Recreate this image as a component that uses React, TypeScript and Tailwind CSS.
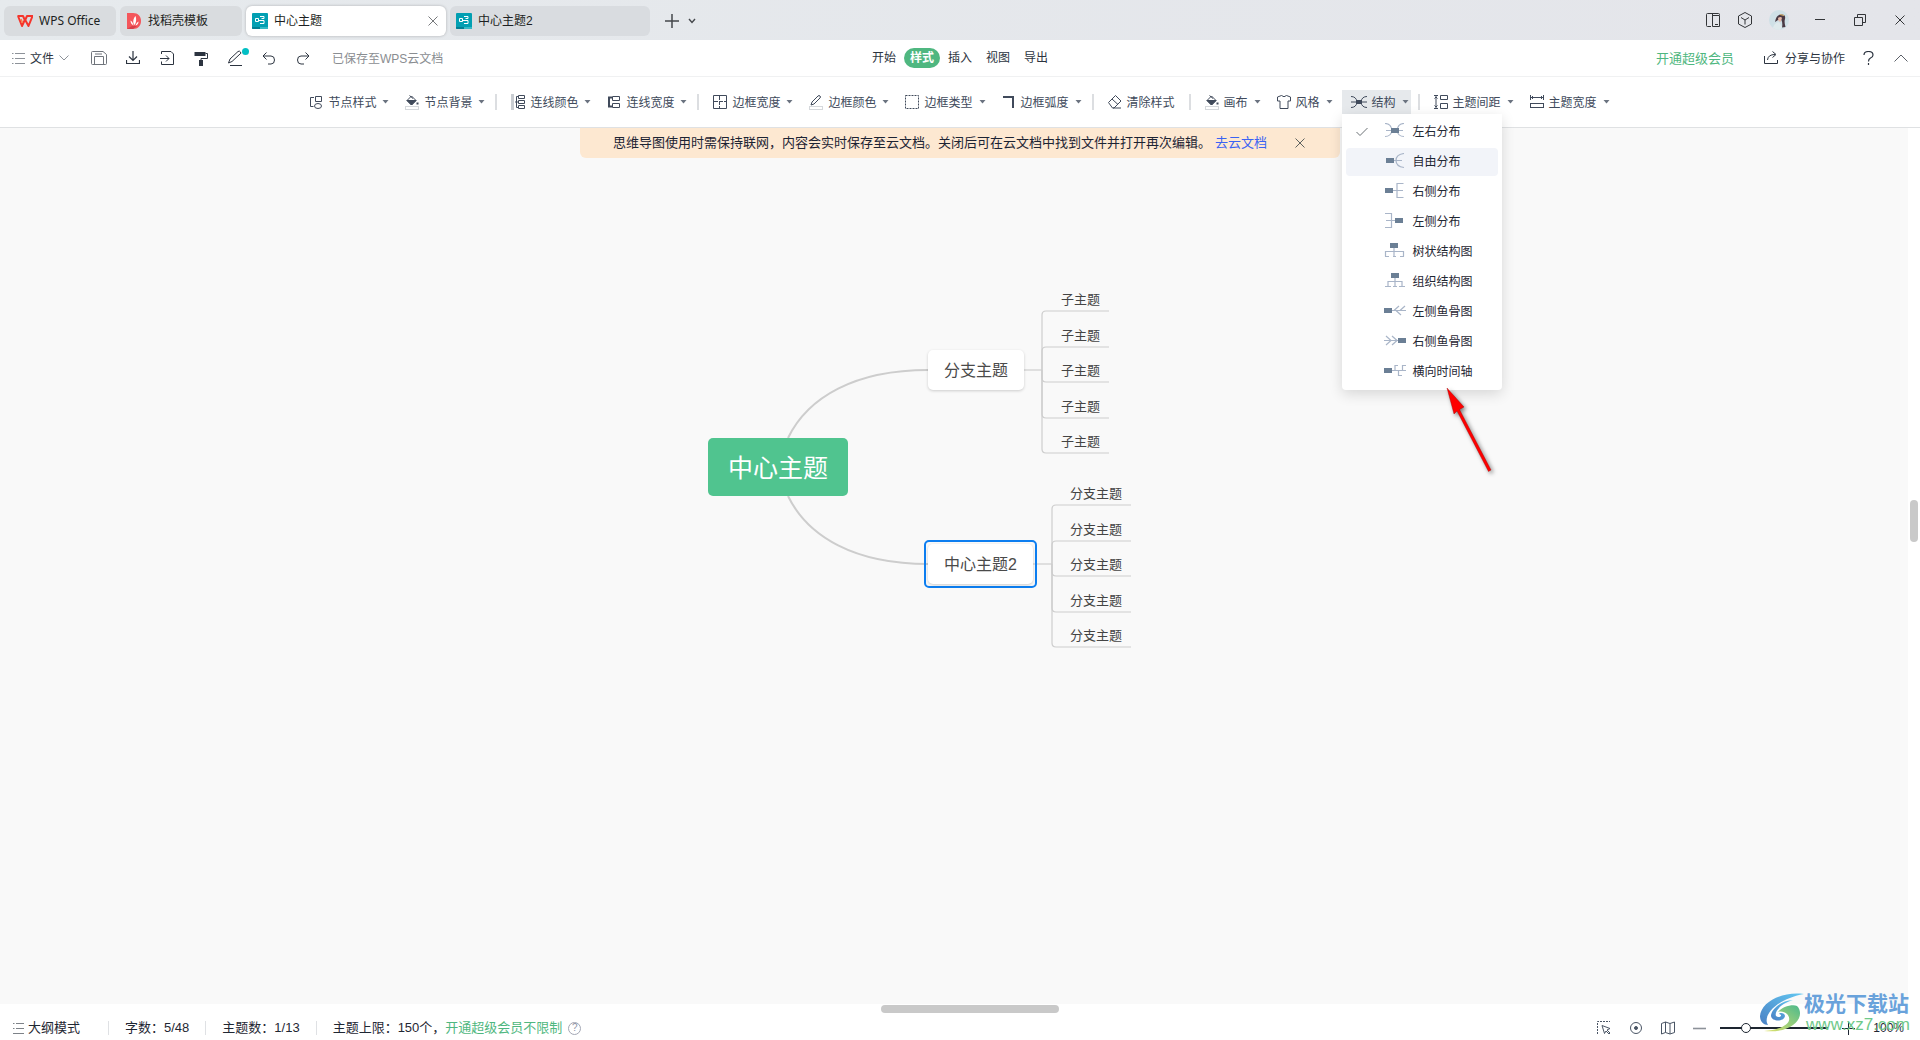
import { useState } from 'react'
import type { ReactNode } from 'react'

interface IconProps {
  w?: number
  h?: number
  className?: string
  children: ReactNode
}

function Icon({ w = 14, h = 14, className = '', children }: IconProps) {
  return (
    <svg
      width={w}
      height={h}
      viewBox={`0 0 ${w} ${h}`}
      fill="none"
      stroke="currentColor"
      strokeWidth={1}
      className={`shrink-0 ${className}`}
      aria-hidden="true"
    >
      {children}
    </svg>
  )
}

const Caret = () => (
  <svg width="7" height="4" viewBox="0 0 7 4" className="shrink-0 text-[#6b7380]" aria-hidden="true">
    <path d="M0.5 0H6.5L3.5 3.5Z" fill="currentColor" />
  </svg>
)

const MindIcon = () => (
  <svg width="16" height="16" viewBox="0 0 16 16" className="shrink-0" aria-hidden="true">
    <rect width="16" height="16" rx="1" fill="#029fb2" />
    <path d="M0 14H8V16H1Q0 16 0 15Z" fill="#017f93" />
    <path d="M8 14H16V15Q16 16 15 16H8Z" fill="#35b9c6" />
    <path d="M3.5 5.5H6.5V8.5H3.5ZM6.5 7.5H12M8 3.5H12V5.5H9.5M12 7.5V10.5H8" fill="none" stroke="#fff" />
  </svg>
)

const DocerIcon = () => (
  <svg width="14" height="16" viewBox="0 0 14 16" className="shrink-0" aria-hidden="true">
    <path d="M0 0H6C11 0 14 3.500 14 8S11 16 6 16H0Z" fill="#f4565b" />
    <path d="M0 16L5 13H10L6 16Z" fill="#d93f49" />
    <path d="M7.500 12C5.500 10 6 5.500 8.500 3C9.500 5.500 9.500 9.500 7.500 12ZM6.500 12.500C4.500 11.500 3.500 9.500 3.500 7.500C5.500 8.500 6 10.500 6.500 12.500ZM8.500 12.500C9 10.500 10 9.500 11.500 8.500C11.500 10.500 10.500 12 8.500 12.500Z" fill="#fff" />
  </svg>
)

const WpsIcon = () => (
  <svg width="16" height="12" viewBox="0 0 16 12" className="shrink-0" aria-hidden="true">
    <path d="M0.500 1H6L8 5.500L10 1H15.500L11.500 11L8 4.500L5 11L1 1" fill="none" stroke="#f5352c" strokeWidth="2" strokeLinejoin="round" />
    <path d="M4 4L5.500 8" stroke="#ff7a45" strokeWidth="1.500" />
  </svg>
)

const Bucket = () => (
  <Icon h={16}>
    <path d="M2 6.5L6.500 2L11 6.500L6.500 11Z" />
    <path d="M2 6.500H11L6.500 11Z" fill="currentColor" />
    <path d="M4.500 1.500L8 4.500" />
    <path d="M12.500 8.500V10.500" strokeWidth="2" />
    <rect x="0.500" y="12.500" width="13" height="3" stroke="#d5d8dc" fill="#fff" />
  </Icon>
)

const NodeStyle = () => (
  <Icon>
    <path d="M5 2.500H1.500V11.500H4.500" />
    <path d="M6.500 1.500H12.500V6.500H6.500Z" />
    <ellipse cx="9" cy="11" rx="3.500" ry="2.500" />
  </Icon>
)

const LineColor = () => (
  <Icon w={15} h={16}>
    <path d="M1.500 0V16" stroke="#c9cdd2" strokeWidth="3" />
    <path d="M4 8H7M5.500 2.500V13.500M5.500 2.500H7.500M5.500 13.500H7.500" />
    <path d="M7.500 1.500H13.500V4.500H7.500ZM7.500 6.500H13.500V9.500H7.500ZM7.500 11.500H13.500V14.500H7.500Z" />
  </Icon>
)

const LineWidth = () => (
  <Icon>
    <path d="M5 2.500H2V11.500H5" strokeWidth="2" />
    <path d="M5.500 1.500H12.500V5.500H5.500ZM5.500 8.500H12.500V12.500H5.500Z" />
  </Icon>
)

const BorderWidth = () => (
  <Icon>
    <path d="M0.500 0.500H13.500V13.500H0.500Z" />
    <path d="M6.500 1V13M1 6.500H13" strokeDasharray="4 1" />
  </Icon>
)

const BorderColor = () => (
  <Icon h={16}>
    <path d="M2 11L3 8L9 2Q10 1 11 2T11 4L5 10Z" />
    <rect x="0.500" y="12.500" width="13" height="3" stroke="#d5d8dc" fill="#fff" />
  </Icon>
)

const BorderType = () => (
  <Icon>
    <rect x="0.500" y="0.500" width="13" height="13" strokeDasharray="2 1" />
  </Icon>
)

const BorderRadius = () => (
  <Icon>
    <path d="M1 2H11V13" strokeWidth="2" />
  </Icon>
)

const Eraser = () => (
  <Icon>
    <path d="M0.500 7.500L7.500 0.500L13 6L6 13H4.500ZM4 4L10 9.500M5 13H13" />
  </Icon>
)

const Shirt = () => (
  <Icon>
    <path d="M4.500 0.500Q7 3 9.500 0.500L13.500 2V6H11V13.500H3V6H0.500V2Z" />
  </Icon>
)

const StructureIcon = () => (
  <Icon w={18}>
    <path d="M1 1.500Q6 1.500 7 6.500M1 12.500Q6 12.500 7 7.500M17 1.500Q12 1.500 11 6.500M17 12.500Q12 12.500 11 7.500M1 7H17" />
    <rect x="6" y="5" width="6" height="4" fill="currentColor" stroke="none" />
  </Icon>
)

const TopicGap = () => (
  <Icon>
    <path d="M0 0.500H4M0 13.500H4M2 1V13M0.500 3.500L2 2L3.500 3.500M0.500 10.500L2 12L3.500 10.500" />
    <path d="M6.500 0.500H13.500V4.500H6.500ZM6.500 8.500H13.500V13.500H6.500Z" />
  </Icon>
)

const TopicWidth = () => (
  <Icon>
    <path d="M0.500 0V5M13.500 0V5M1 2.500H13M3 1L1.500 2.500L3 4M11 1L12.500 2.500L11 4" />
    <rect x="0.500" y="8.500" width="13" height="4" />
  </Icon>
)

interface Tool {
  label: string
  icon: ReactNode
}

const TOOL_GROUPS: Tool[][] = [
  [
    { label: '节点样式', icon: <NodeStyle /> },
    { label: '节点背景', icon: <Bucket /> },
  ],
  [
    { label: '连线颜色', icon: <LineColor /> },
    { label: '连线宽度', icon: <LineWidth /> },
  ],
  [
    { label: '边框宽度', icon: <BorderWidth /> },
    { label: '边框颜色', icon: <BorderColor /> },
    { label: '边框类型', icon: <BorderType /> },
    { label: '边框弧度', icon: <BorderRadius /> },
  ],
]

// [label, line strokes, root block x, root block y]
const STRUCTURES: [string, string, number, number][] = [
  ['左右分布', 'M1 0.500Q7 0.500 8 7.500Q7 13.500 1 13.500M20 0.500Q14 0.500 13 7.500Q14 13.500 20 13.500M2 7.500H19', 7, 5],
  ['自由分布', 'M9 7.500H18M20 0.500Q12 1.500 12 7.500T20 14.500', 2, 5],
  ['右侧分布', 'M9 7.500H19M19.500 0.500H13V14.500H19.500', 1, 5],
  ['左侧分布', 'M12 7.500H2M1 0.500H7.500V14.500H1', 11, 5],
  ['树状结构图', 'M10 5V13M1.500 13.500V8.500H19.500V13.500M1 13.500H5M9 13.500H12M16 13.500H20', 6, 0],
  ['组织结构图', 'M11 5V13M4 13V8.500H18V13M1 13.500H7M9 13.500H13M15 13.500H21', 7, 0],
  ['左侧鱼骨图', 'M8 7.500H22M10 7.500L15 3M16 7.500L21 3M12 7.500L17 12', 0, 5],
  ['右侧鱼骨图', 'M14 7.500H0M8 3L13 7.500M2 3L7 7.500L2 12M13 7.500L8 12', 14, 5],
  ['横向时间轴', 'M8 7.500H22M11 7V2.500H14M18.500 7V2.500H22M14.500 8V12.500H18', 0, 5],
]

function StructureMenu() {
  const [selected, setSelected] = useState('左右分布')
  return (
    <div
      role="menu"
      className="absolute top-full left-0 z-20 flex w-40 flex-col gap-0.5 rounded-b bg-white px-1 pt-1 pb-1 shadow-[0_4px_14px_rgba(0,0,0,0.14)]"
    >
      {STRUCTURES.map(([label, lines, x, y], i) => (
        <button
          key={label}
          role="menuitem"
          onClick={() => setSelected(label)}
          className={`flex h-7 items-center rounded pl-2.5 text-xs text-[#1f2733] ${i === 1 ? 'bg-[#f2f4f9]' : ''}`}
        >
          <span className="w-7">
            {selected === label && (
              <Icon w={12} h={10} className="text-[#6b7075]">
                <path d="M0.500 5L4 8.500L11.500 1" />
              </Icon>
            )}
          </span>
          <Icon w={22} h={18} className="mr-[7px] text-[#a9b5c8]">
            <path d={lines} strokeWidth="1.200" />
            <rect x={x} y={y} width="8" height="5" fill="#6b7f95" stroke="none" />
          </Icon>
          {label}
        </button>
      ))}
    </div>
  )
}

function RedArrow() {
  return (
    <svg
      width="60"
      height="96"
      viewBox="0 0 60 96"
      className="pointer-events-none absolute top-[296px] left-[102px] z-30 drop-shadow-[2px_2px_2px_rgba(0,0,0,0.5)]"
      aria-hidden="true"
    >
      <path d="M3 2L20 21L15.500 23.500L47 84L44.500 85.500L13 25L10 28Z" fill="#fe0000" stroke="#a00000" strokeWidth="0.400" />
    </svg>
  )
}

function ToolButton({ label, icon }: Tool) {
  return (
    <button className="flex h-6 items-center px-2">
      <span className="mr-[5px] flex w-3.5 justify-center">{icon}</span>
      <span className="mr-1.5 pt-0.5">{label}</span>
      <Caret />
    </button>
  )
}

const Divider = () => <span className="mr-1.5 ml-0.5 h-4 w-0.5 bg-[#dcdee1]" />

function Toolbar() {
  return (
    <div className="flex h-[51px] items-center justify-center border-b border-[#dfe1e3] bg-white pr-px text-xs whitespace-nowrap text-[#404a5b]">
      {TOOL_GROUPS.map((group) => (
        <div key={group[0].label} className="flex items-center">
          {group.map((tool) => (
            <ToolButton key={tool.label} {...tool} />
          ))}
          <Divider />
        </div>
      ))}
      <button className="flex h-6 items-center gap-[5px] pr-3 pl-2">
        <Eraser />
        <span className="pt-0.5">清除样式</span>
      </button>
      <Divider />
      <ToolButton label="画布" icon={<Bucket />} />
      <ToolButton label="风格" icon={<Shirt />} />
      <div className="relative mr-[5px] ml-px">
        <button className="flex h-6 items-center bg-[#e6e9ec] pr-0.5 pl-2" aria-expanded="true">
          <StructureIcon />
          <span className="mr-1.5 ml-1 pt-0.5">结构</span>
          <Caret />
        </button>
        <StructureMenu />
        <RedArrow />
      </div>
      <Divider />
      <ToolButton label="主题间距" icon={<TopicGap />} />
      <ToolButton label="主题宽度" icon={<TopicWidth />} />
    </div>
  )
}

function TitleBar() {
  return (
    <header className="flex h-10 items-center justify-between bg-linear-to-r from-[#e6eaed] to-[#e4e5ea] pl-1 text-xs whitespace-nowrap text-[#1d1f22]">
      <div className="flex items-center gap-1 pt-0.5">
        <button className="flex h-[30px] w-28 items-center gap-1.5 rounded-md bg-[#d9dcdf] pl-[13px] font-['Noto_Sans',sans-serif]">
          <WpsIcon />
          WPS Office
        </button>
        <button className="flex h-[30px] w-[122px] items-center gap-[7px] rounded-md bg-[#d9dcdf] pl-[7px]">
          <DocerIcon />
          找稻壳模板
        </button>
        <div className="flex h-[30px] w-50 items-center rounded-md bg-white pr-2 pl-1.5 shadow-[0_0_3px_rgba(0,0,0,0.25)]">
          <button className="flex flex-1 items-center gap-1.5">
            <MindIcon />
            中心主题
          </button>
          <button aria-label="关闭标签" className="text-[#77797c]">
            <Icon w={10} h={10}>
              <path d="M0.500 0.500L9.500 9.500M9.500 0.500L0.500 9.500" />
            </Icon>
          </button>
        </div>
        <button className="flex h-[30px] w-50 items-center gap-1.5 rounded-md bg-[#d9dce0] pl-1.5">
          <MindIcon />
          中心主题2
        </button>
        <button aria-label="新建标签" className="ml-[11px] text-[#44474b]">
          <Icon>
            <path d="M7 0V14M0 7H14" strokeWidth="1.500" />
          </Icon>
        </button>
        <button aria-label="标签列表" className="ml-[5px] text-[#44474b]">
          <Icon w={8} h={6}>
            <path d="M1 1L4 4.500L7 1" strokeWidth="1.400" />
          </Icon>
        </button>
      </div>
      <div className="flex items-center text-[#333538]">
        <button aria-label="侧栏" className="mr-[18px]">
          <Icon>
            <path d="M5 13.500H1.500Q0.500 13.500 0.500 12.500V1.500Q0.500 0.500 1.500 0.500H12.500Q13.500 0.500 13.500 1.500V2M6.500 2.500H13.500V13.500H6.500ZM6.500 0.500V13M9 11.500H12" />
          </Icon>
        </button>
        <button aria-label="应用" className="mr-[17px]">
          <Icon h={16}>
            <path d="M7 0.500L13.500 4V12L7 15.500L0.500 12V4ZM3 5.500L7 8L11 5.500M7 8V12.500" />
          </Icon>
        </button>
        <button aria-label="账户" className="mr-[11px]">
          <svg width="20" height="20" viewBox="0 0 20 20" aria-hidden="true">
            <circle cx="10" cy="10" r="10" fill="#cfe0e6" />
            <path d="M4 18Q5 13 10 12L13 17L11 20Q7 20 4 18Z" fill="#dfeaec" />
            <path d="M6 12Q7 5 12 4.500T16 9Q15 12 16.500 17L13 17.500Q14 13 12 9L9 10Z" fill="#4a3a44" />
            <path d="M9 8Q12 6 13 8L11.500 12L9.500 11Z" fill="#e6b9a8" />
            <path d="M11 4.500L15 5.500" stroke="#d9b46a" />
          </svg>
        </button>
        <button aria-label="最小化" className="flex w-10 justify-center">
          <Icon w={10} h={10}>
            <path d="M0 4.500H10" />
          </Icon>
        </button>
        <button aria-label="还原" className="flex w-10 justify-center">
          <Icon w={12} h={12}>
            <path d="M0.500 3.500H8.500V11.500H0.500ZM3.500 3.500V0.500H11.500V8.500H8.500" />
          </Icon>
        </button>
        <button aria-label="关闭" className="flex w-10 justify-center">
          <Icon w={10} h={10}>
            <path d="M0.500 0.500L9.500 9.500M9.500 0.500L0.500 9.500" />
          </Icon>
        </button>
      </div>
    </header>
  )
}

const QUICK_ACTIONS: Tool[] = [
  {
    label: '保存',
    icon: (
      <Icon w={16} className="text-[#70757c]">
        <path d="M0.500 1.500Q0.500 0.500 1.500 0.500H12L15.500 3.500V12.500Q15.500 13.500 14.500 13.500H1.500Q0.500 13.500 0.500 12.500ZM3.500 13V5.500H12.500V13M4 3H11" />
      </Icon>
    ),
  },
  {
    label: '下载',
    icon: (
      <Icon>
        <path d="M7 0V9M3 5.500L7 9.500L11 5.500M0.500 9V12.500H13.500V9" strokeWidth="1.200" />
      </Icon>
    ),
  },
  {
    label: '导入',
    icon: (
      <Icon>
        <path d="M1.500 3V0.500H11L13.500 3V13.500H1.500V10.500M0 7.500H9M6 4.500L9 7.500L6 10.500" />
      </Icon>
    ),
  },
  {
    label: '格式刷',
    icon: (
      <Icon h={15}>
        <path d="M0.500 1H11.500V5H0.500Z" fill="currentColor" stroke="none" />
        <path d="M11.500 2.500H13.500V7.500H7V10" />
        <path d="M5 9H9V15H5Z" fill="currentColor" stroke="none" />
      </Icon>
    ),
  },
  {
    label: '画笔',
    icon: (
      <span className="relative">
        <Icon h={16}>
          <path d="M0.500 13L2 9L10 1.500Q11.500 0.500 12.500 2T12 4L4 11.500ZM2 15.500H14" />
        </Icon>
        <span className="absolute -top-0.5 -right-[7px] size-[7px] rounded-full bg-[#02bfc4]" />
      </span>
    ),
  },
  {
    label: '撤销',
    icon: (
      <Icon h={13}>
        <path d="M4.500 0.500L1 4L4.500 7.500M1 4H9Q12.500 4 12.500 8T9 12H6" />
      </Icon>
    ),
  },
  {
    label: '恢复',
    icon: (
      <Icon h={13}>
        <path d="M9.500 0.500L13 4L9.500 7.500M13 4H5Q1.500 4 1.500 8T5 12H8" />
      </Icon>
    ),
  },
]

const MENU_TABS = ['开始', '样式', '插入', '视图', '导出']

function MenuBar() {
  const [active, setActive] = useState('样式')
  return (
    <nav className="grid h-[37px] grid-cols-[1fr_auto_1fr] items-center border-b border-[#f0f1f2] bg-white px-3 text-xs whitespace-nowrap text-[#2c3440]">
      <div className="flex items-center">
        <button className="mr-[13px] flex items-center gap-[5px]">
          <Icon w={13} h={11} className="text-[#8d9299]">
            <path d="M3 0.500H13M3 5.500H13M3 10.500H13M0 0.500H1.500M0 5.500H1.500M0 10.500H1.500" />
          </Icon>
          <span className="pt-0.5">文件</span>
          <Icon w={10} h={6} className="text-[#8d9299]">
            <path d="M0.500 0.500L5 5L9.500 0.500" />
          </Icon>
        </button>
        {QUICK_ACTIONS.map(({ label, icon }) => (
          <button key={label} aria-label={label} className="flex w-[34px] justify-center">
            {icon}
          </button>
        ))}
        <span className="ml-3 pt-px text-[#8a8d91]">已保存至WPS云文档</span>
      </div>
      <div className="flex gap-0.5">
        {MENU_TABS.map((tab) => (
          <button
            key={tab}
            onClick={() => setActive(tab)}
            className={`flex h-5 items-center rounded-full px-1.5 ${tab === active ? 'bg-[#4fb780] font-bold text-white' : ''}`}
          >
            {tab}
          </button>
        ))}
      </div>
      <div className="flex items-center justify-end">
        <a href="#vip" className="mr-[30px] pt-px text-[13px] text-[#4fb780]">
          开通超级会员
        </a>
        <button className="mr-[18px] flex items-center gap-1.5">
          <Icon w={15} h={13}>
            <path d="M0.500 5V12.500H13.500V9M3.500 9Q4 3.500 11 3.500M8.500 0.500L12 3.500L8.500 6.500" />
          </Icon>
          <span className="pt-0.5">分享与协作</span>
        </button>
        <button aria-label="帮助" className="mr-5">
          <Icon w={11} h={14}>
            <path d="M1 4Q1 0.500 5.500 0.500T10 4Q10 6 7.500 7Q5.500 8 5.500 10.500M5.500 12V14" strokeWidth="1.200" />
          </Icon>
        </button>
        <button aria-label="收起功能区">
          <Icon h={8} className="text-[#5b6068]">
            <path d="M0.500 7.500L7 1L13.500 7.500" />
          </Icon>
        </button>
      </div>
    </nav>
  )
}

interface Branch {
  child: string
  // left edge of the child rules and of the child text
  railX: number
  textX: number
  endX: number
  startX: number
  midY: number
  ruleYs: number[]
}

const BRANCHES: Branch[] = [
  { child: '子主题', startX: 316, railX: 334, textX: 353, endX: 401, midY: 87, ruleYs: [28, 64, 99, 135, 170] },
  { child: '分支主题', startX: 325, railX: 344, textX: 362, endX: 423, midY: 281, ruleYs: [222, 258, 293, 329, 364] },
]

function rulePath({ railX, endX, midY }: Branch, y: number) {
  const dir = y < midY ? 4 : -4
  return `M${railX} ${midY}V${y + dir}Q${railX} ${y} ${railX + 4} ${y}H${endX}`
}

function MindMap() {
  return (
    <div className="absolute top-[155px] left-1/2 -ml-[246px] h-[372px] w-[424px]">
      <svg width="424" height="372" viewBox="0 0 424 372" fill="none" stroke="#cdcdcd" className="absolute inset-0" aria-hidden="true">
        <path d="M80 155C100 114 147 87 220 87M80 213C100 254 147 281 220 281" strokeWidth="2" />
        {BRANCHES.map((b) => (
          <g key={b.child} strokeWidth="1.200">
            <path d={`M${b.startX} ${b.midY}H${b.railX}`} />
            {b.ruleYs.map((y) => (
              <path key={y} d={rulePath(b, y)} />
            ))}
          </g>
        ))}
      </svg>
      <div className="absolute top-[155px] left-0 flex h-[58px] w-[140px] items-center justify-center rounded-[5px] bg-[#50c48f] pt-1 text-[25px] text-white">
        中心主题
      </div>
      <div className="absolute top-[67px] left-[220px] flex h-10 w-24 items-center justify-center rounded-[5px] bg-white pt-0.5 text-base text-[#4a4a4a] shadow-[0_1px_3px_rgba(0,0,0,0.18)]">
        分支主题
      </div>
      <div className="absolute top-[257px] left-[216px] h-12 w-[113px] rounded-[5px] border-2 border-[#0d7ef0] p-0.5">
        <div className="flex h-10 items-center justify-center rounded-[5px] bg-white pt-0.5 text-base text-[#4a4a4a] shadow-[0_1px_3px_rgba(0,0,0,0.18)]">
          中心主题2
        </div>
      </div>
      {BRANCHES.map((b) =>
        b.ruleYs.map((y) => (
          <span
            key={`${b.child}${y}`}
            className="absolute text-[13px] leading-5 whitespace-nowrap text-[#444]"
            style={{ left: b.textX, top: y - 21 }}
          >
            {b.child}
          </span>
        )),
      )}
    </div>
  )
}

function Notice() {
  return (
    <div className="mx-auto flex h-[30px] w-[760px] items-center rounded-b-md bg-[#fde8d1] pl-[33px] text-[13px] whitespace-nowrap text-[#1c2333]">
      思维导图使用时需保持联网，内容会实时保存至云文档。关闭后可在云文档中找到文件并打开再次编辑。
      <a href="#cloud" className="ml-1 text-[#3a63f3]">
        去云文档
      </a>
      <button aria-label="关闭提示" className="ml-7 text-[#5e625f]">
        <Icon w={10} h={10}>
          <path d="M0.500 0.500L9.500 9.500M9.500 0.500L0.500 9.500" />
        </Icon>
      </button>
    </div>
  )
}

function Watermark() {
  return (
    <div className="pointer-events-none absolute right-2.5 bottom-1.5 flex items-center font-bold whitespace-nowrap">
      <svg width="44" height="42" viewBox="0 0 44 42" aria-hidden="true">
        <defs>
          <linearGradient id="swirlBlue" x1="0" y1="1" x2="1" y2="0">
            <stop offset="0" stopColor="#4a80c4" />
            <stop offset="1" stopColor="#63c8f2" />
          </linearGradient>
          <linearGradient id="swirlGreen" x1="0" y1="1" x2="1" y2="0">
            <stop offset="0" stopColor="#e3e36b" />
            <stop offset="1" stopColor="#4cb98c" />
          </linearGradient>
        </defs>
        <path d="M44 2C22 -1 1 10 0 24C0 30 4 33 8 33C2 24 16 7 44 2Z" fill="url(#swirlBlue)" />
        <path d="M33 8C22 8 11 17 11 24C12 30 24 30 25 24C25 21 20 20 19 22C24 23 19 27 16 24C14 19 22 11 33 8Z" fill="url(#swirlBlue)" />
        <path d="M37 14C46 23 35 42 4 39C20 38 35 31 27 22C25 20 21 19 18 20C22 15 32 12 37 14Z" fill="url(#swirlGreen)" />
      </svg>
      <div className="flex flex-col">
        <span className="text-[21px] leading-6 text-[#69a2db]">极光下载站</span>
        <span className="pl-0.5 text-[17px] leading-[18px] font-normal text-[#6fc98a]">www.xz7.com</span>
      </div>
    </div>
  )
}

function StatusBar() {
  const [zoom, setZoom] = useState(21)
  return (
    <footer className="relative bg-white">
      <div className="flex h-3 justify-center pt-px pl-5">
        <div className="h-2 w-[178px] rounded-full bg-[#c9c9c9]" />
      </div>
      <div className="flex h-6 items-center justify-between pr-4 pl-[13px] text-[13px] whitespace-nowrap text-[#1f2733]">
        <div className="flex items-center">
          <button className="flex items-center gap-1">
            <Icon w={11} h={11} className="text-[#7d8288]">
              <path d="M3 0.500H11M3 5.500H11M0 10.500H11M0 0.500H1.500M0 5.500H1.500" />
            </Icon>
            大纲模式
          </button>
          <span className="mr-4 ml-7 h-3.5 w-px bg-[#dfe1e4]" />
          字数：5/48
          <span className="mx-4 h-3.5 w-px bg-[#dfe1e4]" />
          主题数：1/13
          <span className="mx-4 h-3.5 w-px bg-[#dfe1e4]" />
          主题上限：150个，
          <a href="#vip" className="mr-1.5 text-[#4fb780]">
            开通超级会员不限制
          </a>
          <button aria-label="说明" className="flex size-[13px] items-center justify-center rounded-full border border-[#a3a7b5] text-[10px] leading-none text-[#8f94a5]">
            ?
          </button>
        </div>
        <div className="flex items-center">
          <button aria-label="框选" className="mr-[18px]">
            <Icon className="text-[#4a5565]">
              <path d="M0.500 13V0.500H13" strokeDasharray="2 1" />
              <path d="M5 4.500L13 7.500L10 9L13 12L12 13L9 10L7.500 12.500Z" />
            </Icon>
          </button>
          <button aria-label="定位" className="mr-[18px]">
            <Icon className="text-[#4a5565]">
              <circle cx="7" cy="7" r="5.500" />
              <circle cx="7" cy="7" r="1.500" fill="currentColor" />
            </Icon>
          </button>
          <button aria-label="导航" className="mr-[18px]">
            <Icon className="text-[#4a5565]">
              <path d="M0.500 2.500L4.500 1L9 2.500L13.500 1V11.500L9 13L4.500 11.500L0.500 13ZM4.500 1V11.500M9 2.500V13" />
            </Icon>
          </button>
          <button aria-label="缩小" className="mr-3.5">
            <Icon w={13} className="text-[#8d9299]">
              <path d="M0 7.500H13" strokeWidth="1.600" />
            </Icon>
          </button>
          <input
            type="range"
            aria-label="缩放"
            value={zoom}
            onChange={(e) => setZoom(Number(e.target.value))}
            className="mr-3.5 h-0.5 w-[108px] appearance-none bg-[#1d2530] [&::-webkit-slider-thumb]:size-[10px] [&::-webkit-slider-thumb]:appearance-none [&::-webkit-slider-thumb]:rounded-full [&::-webkit-slider-thumb]:border [&::-webkit-slider-thumb]:border-[#1d2530] [&::-webkit-slider-thumb]:bg-white"
          />
          <button aria-label="放大" className="mr-[18px]">
            <Icon w={13}>
              <path d="M0 7.500H13M6.500 1V14" />
            </Icon>
          </button>
          <span className="text-xs">100%</span>
        </div>
      </div>
      <Watermark />
    </footer>
  )
}

export default function App() {
  return (
    <div className="flex min-h-screen flex-col bg-white font-['Liberation_Sans','Noto_Sans_CJK_SC',sans-serif]">
      <TitleBar />
      <MenuBar />
      <Toolbar />
      <div className="flex flex-1">
        <main className="relative min-h-[560px] flex-1 bg-[#f9f9f9] pl-3">
          <Notice />
          <MindMap />
        </main>
        <div className="flex w-3 flex-col items-center justify-center pb-[90px]">
          <div className="h-[42px] w-2 rounded-full bg-[#c9c9c9]" />
        </div>
      </div>
      <StatusBar />
    </div>
  )
}
